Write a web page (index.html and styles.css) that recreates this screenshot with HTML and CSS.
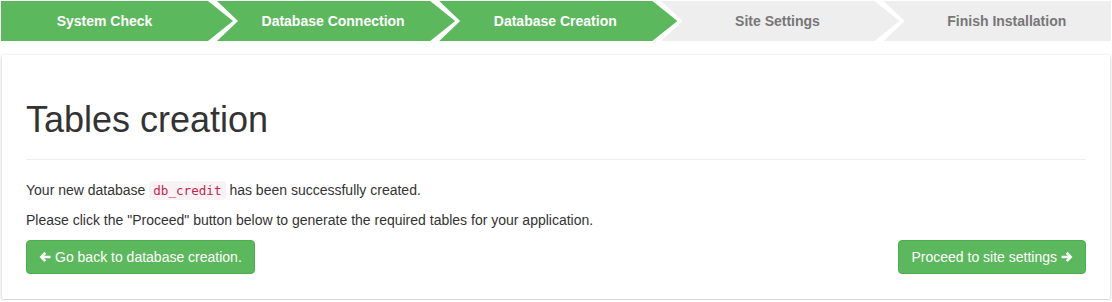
FILE: index.html
```html
<!DOCTYPE html>
<html lang="en">

<head>
    <meta charset="UTF-8" />
    <meta name="viewport" content="width=device-width, initial-scale=1.0" />
    <title>Installation - Tables creation</title>
    <link rel="stylesheet" href="styles.css">
</head>

<body>
    <ul class="steps">
        <li class="step first done">System Check</li>
        <li class="step done">Database Connection</li>
        <li class="step done">Database Creation</li>
        <li class="step">Site Settings</li>
        <li class="step last">Finish Installation</li>
    </ul>

    <div class="panel">
        <div class="page-header">
            <h1>Tables creation</h1>
        </div>
        <p>Your new database <code>db_credit</code> has been successfully created.</p>
        <p>Please click the "Proceed" button below to generate the required tables for your application.</p>
        <div class="actions">
            <a href="#" class="btn">
                <svg class="icon" viewBox="0 0 14 14"><path d="M6.4 1 L0.6 6.9 L6.4 12.8 L8.5 10.7 L6.1 8.4 H13.4 V5.4 H6.1 L8.5 3.1 Z" /></svg>
                Go back to database creation.
            </a>
            <a href="#" class="btn">
                Proceed to site settings
                <svg class="icon" viewBox="0 0 14 14"><path d="M7.6 1 L13.4 6.9 L7.6 12.8 L5.5 10.7 L7.9 8.4 H0.6 V5.4 H7.9 L5.5 3.1 Z" /></svg>
            </a>
        </div>
    </div>
</body>

</html>
```

FILE: styles.css
```css
body {
    font-family: "Liberation Sans", Arial, sans-serif;
    font-size: 14px;
    line-height: 20px;
    color: #333;
    background-color: #fff;
    margin: 0;
    padding: 1px;
}

/* wizard steps */
.steps {
    display: flex;
    list-style: none;
    margin: 0;
    padding: 0;
    height: 40px;
}

.step {
    width: 238.2px;
    flex: none;
    margin-left: -16px;
    padding: 0 25px 0 19px;
    box-sizing: border-box;
    line-height: 40px;
    text-align: center;
    font-weight: bold;
    font-size: 14px;
    color: #777;
    background-color: #eee;
    clip-path: polygon(0 0, calc(100% - 25px) 0, 100% 50%, calc(100% - 25px) 100%, 0 100%, 21px 50%);
}

.step.done {
    background-color: #5cb85c;
    color: #fff;
}

.step.first {
    width: 232px;
    margin-left: 0;
    padding-left: 0;
    clip-path: polygon(0 0, calc(100% - 25px) 0, 100% 50%, calc(100% - 25px) 100%, 0 100%);
}

.step.last {
    flex: 1;
    width: auto;
    padding-right: 0;
    clip-path: polygon(0 0, 100% 0, 100% 100%, 0 100%, 21px 50%);
}

/* main box */
.panel {
    margin: 14px 1px 0;
    padding: 25px 24px;
    background-color: #fff;
    box-shadow: 0 1px 3px rgba(0, 0, 0, 0.25);
}

.page-header {
    padding-bottom: 9px;
    margin-bottom: 20px;
    border-bottom: 1px solid #eee;
}

h1 {
    margin: 20px 0 10px;
    font-size: 36px;
    font-weight: normal;
    line-height: 1.1;
}

p {
    margin: 0 0 10px;
}

code {
    font-family: "DejaVu Sans Mono", "Liberation Mono", monospace;
    font-size: 90%;
    line-height: 1;
    padding: 2px 4px;
    color: #c7254e;
    background-color: #f9f2f4;
    border-radius: 4px;
}

.actions {
    display: flex;
    justify-content: space-between;
}

.btn {
    display: inline-flex;
    align-items: center;
    gap: 4px;
    padding: 6px 12px;
    font-size: 14px;
    line-height: 20px;
    color: #fff;
    text-decoration: none;
    background-color: #5cb85c;
    border: 1px solid #4cae4c;
    border-radius: 4px;
}

.btn:hover {
    background-color: #449d44;
}

.icon {
    width: 12px;
    height: 12px;
    fill: #fff;
}
```
